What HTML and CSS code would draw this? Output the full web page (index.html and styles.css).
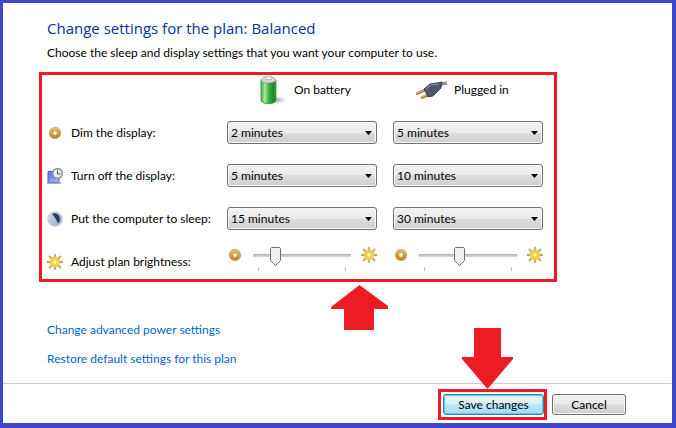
FILE: index.html
```
<!DOCTYPE html>
<html lang="en">
<head>
  <meta charset="UTF-8" />
  <meta name="viewport" content="width=device-width, initial-scale=1.0" />
  <title>Edit Plan Settings</title>
  <link rel="stylesheet" href="styles.css">
</head>
<body>
  <!-- shared icons -->
  <svg class="defs" width="0" height="0" aria-hidden="true">
    <defs>
      <linearGradient id="gold" x1="0" y1="0" x2="0" y2="1">
        <stop offset="0" stop-color="#e6b860" />
        <stop offset="1" stop-color="#c08a2a" />
      </linearGradient>
      <linearGradient id="green" x1="0" y1="0" x2="1" y2="0">
        <stop offset="0" stop-color="#3fa845" />
        <stop offset="0.25" stop-color="#a9e8a4" />
        <stop offset="0.5" stop-color="#43b649" />
        <stop offset="0.8" stop-color="#1c8a26" />
        <stop offset="1" stop-color="#3d9c42" />
      </linearGradient>
      <linearGradient id="screen" x1="0" y1="0" x2="1" y2="1">
        <stop offset="0" stop-color="#5a70e0" />
        <stop offset="1" stop-color="#a9bdff" />
      </linearGradient>
      <linearGradient id="moon" x1="0" y1="0" x2="1" y2="1">
        <stop offset="0" stop-color="#d3deee" />
        <stop offset="1" stop-color="#8fa6cc" />
      </linearGradient>
      <radialGradient id="shadow">
        <stop offset="0" stop-color="#888" stop-opacity="0.7" />
        <stop offset="1" stop-color="#888" stop-opacity="0" />
      </radialGradient>
    </defs>
    <symbol id="icon-dim" viewBox="0 0 16 16">
      <circle cx="8" cy="8" r="4" fill="#fff" stroke="url(#gold)" stroke-width="3.6" />
      <circle cx="8" cy="8" r="2.2" fill="none" stroke="#a87422" stroke-width="0.5" />
      <circle cx="8" cy="8" r="5.7" fill="none" stroke="#b98a3c" stroke-width="0.5" />
    </symbol>
    <symbol id="icon-sun" viewBox="0 0 16 16">
      <path d="M8 0v3M8 13v3M0 8h3M13 8h3M2 2l2.500 2.500M11.500 11.500L14 14M2 14l2.500-2.500M11.500 4.500L14 2" stroke="#c3a95c" stroke-width="1.8" />
      <circle cx="8" cy="8" r="3.5" fill="#fffbd0" stroke="#f8d840" stroke-width="2.6" />
      <circle cx="8" cy="8" r="4.9" fill="none" stroke="#cf9d2c" stroke-width="0.6" />
      <circle cx="8" cy="8" r="2.2" fill="none" stroke="#cf9d2c" stroke-width="0.5" />
    </symbol>
  </svg>

  <main>
    <h1>Change settings for the plan: Balanced</h1>
    <p class="intro">Choose the sleep and display settings that you want your computer to use.</p>

    <div class="settings">
      <div class="head head-battery">
        <svg class="head-icon" viewBox="0 0 34 30">
          <ellipse cx="17" cy="25" rx="9" ry="4" fill="url(#shadow)" />
          <path d="M1 5v20c0 5 15 5 15 0V5z" fill="url(#green)" stroke="#2c8a35" stroke-width="0.7" />
          <ellipse cx="8.500" cy="5" rx="7.500" ry="3" fill="#d3dbd8" stroke="#8d9a95" stroke-width="0.7" />
          <ellipse cx="8.500" cy="3" rx="3.500" ry="1.800" fill="#f2f5f6" stroke="#98a3a8" stroke-width="0.7" />
        </svg>
        On battery
      </div>
      <div class="head head-plug">
        <svg class="head-icon" viewBox="0 0 34 30">
          <path d="M20 12c4-4 6-3 11-4" fill="none" stroke="#8f96a0" stroke-width="3.500" />
          <path d="M0 19l9-4M5 23l9-4" stroke="#9c6d35" stroke-width="2.600" />
          <path d="M0 18.500l9-4M5 22.500l9-4" stroke="#e8c48e" stroke-width="1" />
          <path d="M8 14l6-5 12-2-1 6-8 8-5 1z" fill="#50566a" stroke="#30343f" stroke-width="0.8" />
          <path d="M10 14l5-4 8-1" fill="none" stroke="#9299ab" stroke-width="1" />
        </svg>
        Plugged in
      </div>

      <div class="label">
        <svg class="icon" viewBox="0 0 16 16"><use href="#icon-dim" /></svg>
        <span id="dim">Dim the display:</span>
      </div>
      <select aria-labelledby="dim"><option>2 minutes</option><option>5 minutes</option><option>10 minutes</option></select>
      <select aria-labelledby="dim"><option>5 minutes</option><option>10 minutes</option><option>15 minutes</option></select>

      <div class="label">
        <svg class="icon" viewBox="0 0 16 16">
          <path d="M1 3.500h11v11h-11z" fill="url(#screen)" stroke="#5563b8" />
          <path d="M0 15h14" stroke="#8c93a8" stroke-width="1.500" />
          <circle cx="10.500" cy="5.500" r="4.800" fill="#e9f3fa" stroke="#868e96" stroke-width="1.500" />
          <path d="M10.500 2.500v3.500h3" fill="none" stroke="#3c5672" />
        </svg>
        <span id="off">Turn off the display:</span>
      </div>
      <select aria-labelledby="off"><option>5 minutes</option><option>10 minutes</option><option>15 minutes</option></select>
      <select aria-labelledby="off"><option>10 minutes</option><option>15 minutes</option><option>30 minutes</option></select>

      <div class="label">
        <svg class="icon" viewBox="0 0 16 16">
          <circle cx="8" cy="8" r="7.300" fill="url(#moon)" stroke="#c2cddd" stroke-width="0.8" />
          <path d="M5 3c4-2 8 1 8 5 0 2-1 4-2 4C9 9 8 6 5 3z" fill="#2e3f5c" />
        </svg>
        <span id="sleep">Put the computer to sleep:</span>
      </div>
      <select aria-labelledby="sleep"><option>15 minutes</option><option>30 minutes</option><option>1 hour</option></select>
      <select aria-labelledby="sleep"><option>30 minutes</option><option>1 hour</option><option>Never</option></select>

      <div class="label label-brightness">
        <svg class="icon" viewBox="0 0 16 16"><use href="#icon-sun" /></svg>
        <span id="brightness">Adjust plan brightness:</span>
      </div>
      <div class="slider">
        <svg class="icon" viewBox="0 0 16 16"><use href="#icon-dim" /></svg>
        <input type="range" min="0" max="100" value="20" aria-labelledby="brightness" />
        <svg class="icon" viewBox="0 0 16 16"><use href="#icon-sun" /></svg>
      </div>
      <div class="slider">
        <svg class="icon" viewBox="0 0 16 16"><use href="#icon-dim" /></svg>
        <input type="range" min="0" max="100" value="40" aria-labelledby="brightness" />
        <svg class="icon" viewBox="0 0 16 16"><use href="#icon-sun" /></svg>
      </div>

      <svg class="arrow-up" viewBox="0 0 57 45">
        <path d="M28.500 0L57 21v3H43v21H13V24H0v-2z" fill="#ed1c24" />
      </svg>
    </div>

    <div class="links">
      <a href="#">Change advanced power settings</a>
      <a href="#">Restore default settings for this plan</a>
    </div>
  </main>

  <footer>
    <div class="highlight">
      <svg class="arrow-down" viewBox="0 0 51 61">
        <path d="M12 0h27v29h12v2L25.500 61 0 31v-2h12z" fill="#ed1c24" />
      </svg>
      <button class="save">Save changes</button>
    </div>
    <button class="cancel">Cancel</button>
  </footer>
</body>
</html>
```
FILE: styles.css
```
* {
  margin: 0;
  padding: 0;
  box-sizing: border-box;
}
body {
  display: flex;
  flex-direction: column;
  min-height: 100vh;
  border: 3px solid #3f48cc;
  border-right-width: 4px;
  border-bottom-width: 5px;
  background-color: #fff;
  color: #000;
  font-family: Lato, "Open Sans", sans-serif;
  font-size: 12px;
  line-height: 16px;
}
.defs {
  position: absolute;
}
main {
  flex: 1;
  padding: 13px 115px 0 36px;
}
h1 {
  padding-left: 8px;
  color: #003399;
  font-family: "Open Sans", sans-serif;
  font-size: 15px;
  font-weight: normal;
  line-height: 24px;
}
.intro {
  margin: 5px 0 11px;
  padding-left: 8px;
  white-space: nowrap;
}

/* settings grid */
.settings {
  position: relative;
  display: grid;
  grid-template-columns: 164px minmax(0, 1fr) minmax(0, 1fr);
  grid-template-rows: 36px repeat(3, 43px) 39px;
  column-gap: 16px;
  align-items: center;
  padding: 0 11px 0 5px;
  border: 3px solid #ed1c24;
}
.head {
  display: flex;
  align-items: center;
  align-self: start;
  height: 30px;
}
.head-battery {
  grid-column: 2;
  padding-left: 33px;
}
.head-plug {
  gap: 4px;
  padding-left: 23px;
}
.head-icon {
  width: 34px;
  height: 30px;
}
.label {
  display: flex;
  align-items: center;
  gap: 8px;
  white-space: nowrap;
}
.label-brightness {
  padding-top: 4px;
}
.icon {
  flex: none;
  width: 16px;
  height: 16px;
}
select {
  appearance: none;
  width: 100%;
  height: 23px;
  padding: 0 20px 0 3px;
  border: 1px solid #707070;
  border-radius: 3px;
  background: url("data:image/svg+xml,%3Csvg xmlns='http://www.w3.org/2000/svg' width='7' height='4'%3E%3Cpath d='M0 0h7L3.500 4z'/%3E%3C/svg%3E") no-repeat right 4px center, linear-gradient(#f2f2f2 0%, #ebebeb 50%, #dddddd 50%, #cfcfcf 100%);
  box-shadow: inset 0 0 0 1px #f8f8f8;
  color: #000;
  font: inherit;
}

/* brightness sliders */
.slider {
  display: flex;
  align-items: flex-start;
  gap: 10px;
}
input[type="range"] {
  appearance: none;
  flex: 1;
  width: 100%;
  min-width: 0;
  height: 26px;
  background: transparent;
}
input[type="range"]::-webkit-slider-runnable-track {
  height: 26px;
  background:
    linear-gradient(#a9b1b1, #d6dcdc) no-repeat 0 7px / 100% 3px,
    linear-gradient(#bbb, #bbb) no-repeat 5px 20px / 1px 4px,
    linear-gradient(#bbb, #bbb) no-repeat right 5px top 20px / 1px 4px;
}
input[type="range"]::-webkit-slider-thumb {
  appearance: none;
  width: 11px;
  height: 19px;
  background: url("data:image/svg+xml,%3Csvg xmlns='http://www.w3.org/2000/svg' width='11' height='19'%3E%3Cpath d='M.5 1.500l1-1h8l1 1v12l-5 5-5-5z' fill='%23f1f1f1' stroke='%23707070'/%3E%3C/svg%3E") no-repeat;
}

.links {
  display: flex;
  flex-direction: column;
  align-items: flex-start;
  gap: 13px;
  padding: 40px 0 16px 8px;
}
.links a {
  color: #0066cc;
  text-decoration: none;
}

footer {
  display: flex;
  justify-content: flex-end;
  align-items: center;
  gap: 5px;
  padding: 5px 46px 3px;
  border-top: 1px solid #ccc;
}
.highlight {
  position: relative;
  padding: 2px 0 2px 2px;
  border: 3px solid #ed1c24;
}
button {
  display: block;
  height: 21px;
  border: 1px solid #707070;
  border-radius: 3px;
  background: linear-gradient(#f2f2f2 0%, #ebebeb 50%, #dddddd 50%, #cfcfcf 100%);
  box-shadow: inset 0 0 0 1px #f8f8f8;
  color: #000;
  font: inherit;
}
.save {
  width: 101px;
  border-color: #3c7fb1;
  background: linear-gradient(#eaf6fd 0%, #d9f0fc 50%, #bee6fd 50%, #a7d9f5 100%);
  box-shadow: inset 0 0 0 1px #48d0f8;
}
.cancel {
  width: 74px;
}

/* pointer arrows */
.arrow-up {
  position: absolute;
  top: 100%;
  left: 289px;
  width: 57px;
  margin-top: 6px;
}
.arrow-down {
  position: absolute;
  bottom: 100%;
  left: 21px;
  width: 51px;
  margin-bottom: 3px;
}
```
